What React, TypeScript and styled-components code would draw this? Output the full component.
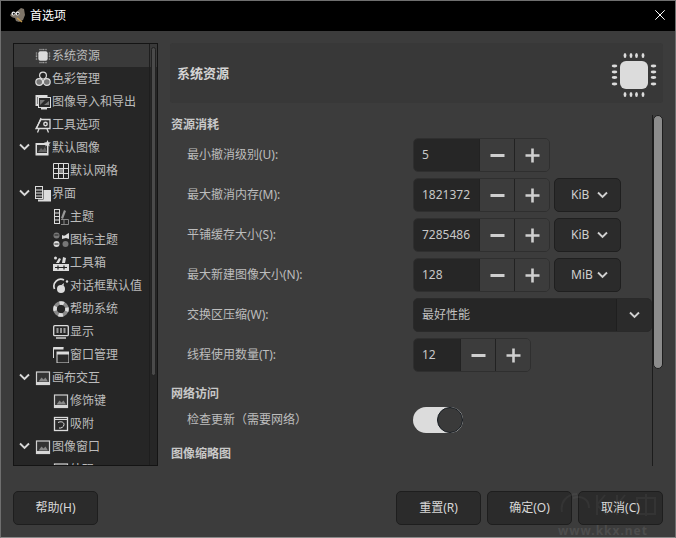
import React from "react";
import styled, { createGlobalStyle } from "styled-components";

const Global = createGlobalStyle`
  html, body { margin: 0; padding: 0; background: #3c3c3c; }
  * { box-sizing: border-box; }
  body { font-family: "Noto Sans", "Noto Sans CJK SC", sans-serif; font-size: 12px; color: #c8c8c8; }
`;

const Window = styled.div`
  position: relative; width: 676px; height: 538px; display: flex; flex-direction: column;
  background: #3c3c3c; border: 1px solid #6f6f6f; border-bottom-color: #8a8a8a; overflow: hidden;
`;
const TitleBar = styled.header`
  height: 30px; flex: none; background: #000; color: #fff; display: flex; align-items: center;
  padding: 0 10px 2px 8px; gap: 3px;
`;
const TitleText = styled.span`flex: 1; font-size: 12px;`;
const Body = styled.main`
  flex: 1; min-height: 0; padding: 12px; display: flex; flex-direction: column; gap: 25px;
`;
const Panes = styled.div`flex: 1; min-height: 0; display: flex; gap: 12px;`;
const Sidebar = styled.nav`
  position: relative; width: 145px; flex: none; background: #262626; border: 1px solid #141414; overflow: hidden;
`;
const Tree = styled.ul`margin: 0; padding: 0; list-style: none; overflow: hidden; height: 100%;`;
const TreeRow = styled.li<{ $level: number; $selected?: boolean }>`
  height: 23px; display: flex; align-items: center; white-space: nowrap;
  padding-left: ${p => (p.$level === 0 ? 21 : 39)}px; gap: 1px; position: relative;
  background: ${p => (p.$selected ? "#3a3a3a" : "transparent")};
  color: #bcbcbc;
`;
const TreeText = styled.span`padding-bottom: 2px;`;
const Expander = styled.span`position: absolute; left: 5px; top: 7px; display: flex;`;
const TreeScroll = styled.div`
  position: absolute; top: 0; right: 0; bottom: 0; width: 8px; border-left: 1px solid #1e1e1e; padding: 3px 1px 0 1px;
`;
const TreeThumb = styled.div`height: 329px; background: #4a4a4a; border: 1px solid #222; border-radius: 3px;`;
const Content = styled.section`flex: 1; min-width: 0; display: flex; flex-direction: column; gap: 12px;`;
const PageHeader = styled.div`
  height: 60px; flex: none; display: flex; align-items: center; justify-content: space-between;
  background: #383838; border-radius: 3px; padding: 0 5px 0 7px;
`;
const PageTitle = styled.h1`margin: 0 0 2px; font-size: 13px; font-weight: 700; color: #d4d4d4;`;
const HeaderIcon = styled.span`display: flex; margin-top: 3px;`;
const ScrollArea = styled.div`flex: 1; min-height: 0; display: flex;`;
const Viewport = styled.div`
  flex: 1; min-width: 0; overflow: hidden; border-right: 1px solid #1c1c1c; padding-left: 1px;
`;
const SectionTitle = styled.h2<{ $top: number }>`
  margin: ${p => p.$top}px 0 5px; height: 18px; line-height: 20px;
  font-size: 12px; font-weight: 700; color: #c8c8c8;
`;
const Rows = styled.div`display: flex; flex-direction: column; gap: 6px;`;
const Row = styled.div`display: flex; align-items: center; padding-left: 16px; min-height: 26px;`;
const Label = styled.label`width: 226px; flex: none; color: #bdbdbd; padding-bottom: 2px;`;
const Controls = styled.div`display: flex; gap: 4px; flex: 1;`;
const Spin = styled.div`
  display: flex; height: 34px; border: 1px solid #2f2f2f; border-radius: 5px; overflow: hidden; background: #3c3c3c;
`;
const SpinEntry = styled.div<{ $w: number }>`
  width: ${p => p.$w}px; background: #262626; display: flex; align-items: center; padding: 0 0 2px 8px;
  color: #c8c8c8; font-size: 12px;
`;
const SpinButton = styled.button`
  width: 35px; border: 0; border-left: 1px solid #222; background: #3c3c3c; padding: 0;
  display: flex; align-items: center; justify-content: center;
`;
const UnitButton = styled.button`
  width: 67px; height: 34px; background: #2b2b2b; border: 1px solid #1f1f1f; border-radius: 5px; padding: 0 12px 0 16px;
  display: flex; align-items: center; justify-content: space-between; color: #d0d0d0; font: inherit;
`;
const UnitText = styled.span`padding-bottom: 2px;`;
const Combo = styled.div`
  flex: 1; height: 34px; display: flex; background: #262626; border: 1px solid #2a2a2a; border-radius: 5px; overflow: hidden;
`;
const ComboText = styled.span`flex: 1; display: flex; align-items: center; padding: 0 0 2px 8px; color: #c0c0c0;`;
const ComboArrow = styled.span`
  width: 35px; display: flex; align-items: center; justify-content: center; background: #2b2b2b; border-left: 1px solid #1f1f1f;
`;
const Switch = styled.div`
  width: 50px; height: 26px; border-radius: 13px; background: #dcdcdc; display: flex; justify-content: flex-end;
`;
const Knob = styled.div`width: 26px; height: 26px; border-radius: 50%; background: #3a3a3a; border: 1px solid #141a20;`;
const VScroll = styled.div`width: 10px; flex: none; display: flex; flex-direction: column;`;
const VThumb = styled.div`height: 254px; background: #8c8c8c; border: 1px solid #1e1e1e; border-radius: 5px;`;
const Footer = styled.footer`height: 34px; flex: none; display: flex; gap: 6px;`;
const FootButton = styled.button`
  width: 85px; height: 34px; background: #2b2b2b; border: 1px solid #1e1e1e; border-radius: 5px;
  color: #d8d8d8; font: inherit; padding: 0 0 2px;
`;
const Spacer = styled.div`flex: 1;`;
const Watermark = styled.div`
  position: absolute; right: 27px; bottom: -2px; color: #4d4d4d; font-weight: 700; font-size: 12px;
  letter-spacing: 1px; pointer-events: none;
`;
const WatermarkMark = styled.svg`
  position: absolute; right: 12px; bottom: 19px; pointer-events: none;
`;

const F = "#dcdcdc";

const Chip = ({ size }: { size: number }) => (
  <svg width={size} height={size} viewBox="0 0 48 48">
    <rect x="10" y="10" width="28" height="28" rx="6" fill={F} />
    {[15, 21, 26.5, 33].map(v => (
      <g key={v} fill={F}>
        <ellipse cx={v} cy="4.5" rx="1.4" ry="2.6" />
        <ellipse cx={v} cy="43.5" rx="1.4" ry="2.6" />
        <ellipse cx="4.5" cy={v} rx="2.8" ry="1.4" />
        <ellipse cx="43.5" cy={v} rx="2.8" ry="1.4" />
      </g>
    ))}
  </svg>
);

const Glyphs: Record<string, React.ReactNode> = {
  chip: <Chip size={16} />,
  color: (
    <svg width="16" height="16" viewBox="0 0 16 16" fill="#555" stroke={F} strokeWidth="1.2">
      <circle cx="8" cy="4.6" r="3.4" fill="#262626" /><circle cx="4.2" cy="11" r="3.4" fill="#777" /><circle cx="11.8" cy="11" r="3.4" fill="#777" />
    </svg>
  ),
  io: (
    <svg width="16" height="16" viewBox="0 0 16 16">
      <path d="M0.5 1h12v2H2.5v7h2v2h-4z" fill={F} />
      <rect x="3.5" y="3.5" width="12" height="10" fill="#2a2a2a" stroke={F} />
      <path d="M5 6h5l-5 5zM14 11H9l5-4z" fill="#777" />
      <rect x="6" y="14" width="6" height="1.5" fill={F} />
    </svg>
  ),
  tool: (
    <svg width="16" height="16" viewBox="0 0 16 16">
      <path d="M1 11.5h14v-9H6z" fill="#2a2a2a" stroke={F} strokeWidth="1.3" />
      <path d="M6 1L1.5 11.5M4 12l-1.5 3.5M12 12l1.5 3.5" stroke={F} strokeWidth="1.3" fill="none" />
      <circle cx="10.5" cy="7" r="2.4" fill={F} /><circle cx="10.5" cy="7" r="1" fill="#2a2a2a" />
    </svg>
  ),
  defimg: (
    <svg width="16" height="16" viewBox="0 0 16 16">
      <rect x="0.5" y="3" width="13" height="12.5" fill={F} />
      <rect x="2" y="5" width="10" height="8" fill="#333" />
      <path d="M3 12l3-4 2 2 2-3 2 5z" fill="#666" />
      <path d="M12.5 0l1 2.2 2.4.2-1.8 1.6.6 2.4-2.2-1.3-2.2 1.3.6-2.4L9.1 2.4l2.4-.2z" fill={F} />
    </svg>
  ),
  grid: (
    <svg width="16" height="16" viewBox="0 0 16 16" fill="none" stroke={F}>
      <rect x="5.5" y="5.5" width="5" height="5" fill="#888" stroke="none" />
      <path d="M.5.5h15v15H.5zM5.5.5v15M10.5.5v15M.5 5.5h15M.5 10.5h15" />
    </svg>
  ),
  iface: (
    <svg width="16" height="16" viewBox="0 0 16 16">
      <rect x="0.5" y="0.5" width="7" height="12" fill="#2a2a2a" stroke={F} />
      <path d="M1 4h6M1 7h6M1 10h6" stroke={F} />
      <path d="M8.5 4H16v11.5H3v-2h5.5z" fill={F} />
    </svg>
  ),
  theme: (
    <svg width="16" height="16" viewBox="0 0 16 16">
      <rect x="1.5" y="0.5" width="5" height="14" fill="#2a2a2a" stroke={F} />
      <path d="M2 4h4M2 7.5h4M2 11h4" stroke={F} />
      <path d="M8 9l3-8 2 1-3 8z" fill="#999" />
      <path d="M8 10.5h7.5v5H8M11 10.5v5" stroke="#888" fill="none" />
    </svg>
  ),
  icontheme: (
    <svg width="16" height="16" viewBox="0 0 16 16">
      <circle cx="3.5" cy="3.5" r="3" fill="#777" />
      <path d="M9 3c2 1 3 1 5-1l2-1v6l-3-1-4 1z" fill={F} />
      <circle cx="3.5" cy="12" r="3" fill={F} />
      <circle cx="12.5" cy="12" r="3" fill="#777" />
      <path d="M1.5 3h4M1.5 12h4" stroke="#222" />
    </svg>
  ),
  toolbox: (
    <svg width="16" height="16" viewBox="0 0 16 16">
      <path d="M0 9h16v7H0z" fill={F} />
      <path d="M2 12.5h12M5 10.5v4M11 10.5v4" stroke="#222" strokeWidth="1.2" />
      <path d="M3 8l3-5 2 1-2 4zM9 8l1-6 3 1-1 5z" fill={F} />
      <circle cx="2.5" cy="3" r="1.5" fill={F} />
    </svg>
  ),
  dialog: (
    <svg width="16" height="16" viewBox="0 0 16 16" fill="none">
      <path d="M1.5 11A7 7 0 0 1 11 2" stroke={F} strokeWidth="1.7" />
      <circle cx="14" cy="3.5" r="1.2" fill={F} />
      <circle cx="8" cy="11" r="4" fill={F} />
      <path d="M8.5 7L11 5 10.5 8z" fill={F} />
    </svg>
  ),
  help: (
    <svg width="16" height="16" viewBox="0 0 16 16" fill="none">
      <circle cx="8" cy="8" r="6" stroke="#8a8a8a" strokeWidth="3.6" />
      <circle cx="8" cy="8" r="6" stroke={F} strokeWidth="3.6" strokeDasharray="4.5 4.9" strokeDashoffset="2.2" />
    </svg>
  ),
  display: (
    <svg width="16" height="16" viewBox="0 0 16 16" fill="none">
      <rect x="0.7" y="1.7" width="14.6" height="10" rx="1" stroke={F} strokeWidth="1.3" />
      <path d="M4.5 4v5M8 4v5M11.5 4v5" stroke="#999" strokeWidth="2" />
      <path d="M3 14h10" stroke={F} strokeWidth="1.4" />
    </svg>
  ),
  wins: (
    <svg width="16" height="16" viewBox="0 0 16 16">
      <path d="M.5 11V.5h10" fill="none" stroke={F} />
      <path d="M.5.5h10v2H.5z" fill={F} />
      <rect x="4" y="5" width="12" height="11" fill="#2a2a2a" stroke={F} />
      <path d="M4 5h12v2.5H4z" fill={F} />
    </svg>
  ),
  canvas: (
    <svg width="16" height="16" viewBox="0 0 16 16">
      <rect x="1.5" y="2" width="13" height="12.5" fill="#333" stroke="#d0d0d0" strokeWidth="1.2" />
      <rect x="1" y="12" width="14" height="2.8" fill="#d8d8d8" />
      <path d="M3.5 11.5l3-4 2 2 2-2 2.5 4z" fill="#888" />
    </svg>
  ),
  snap: (
    <svg width="16" height="16" viewBox="0 0 16 16" fill="none">
      <rect x="1.5" y="1.5" width="13" height="13" fill="#2a2a2a" stroke={F} strokeWidth="1.3" />
      <path d="M1.5 3.5h13" stroke={F} />
      <path d="M5 6.5c3-1.5 6-.5 6 2s-3 4-5 3.5" stroke={F} />
    </svg>
  ),
};

const Chevron = ({ color = "#cfcfcf" }: { color?: string }) => (
  <svg width="11" height="8" viewBox="0 0 11 8" fill="none">
    <path d="M1 1.5l4.5 4.5L10 1.5" stroke={color} strokeWidth="1.9" />
  </svg>
);
const Minus = () => (
  <svg width="15" height="15" viewBox="0 0 15 15"><path d="M0.5 7.5h14" stroke="#cfcfcf" strokeWidth="3" /></svg>
);
const Plus = () => (
  <svg width="15" height="15" viewBox="0 0 15 15"><path d="M0.5 7.5h14M7.5 0.5v14" stroke="#cfcfcf" strokeWidth="2.6" /></svg>
);

const nav: { t: string; i: string; l: number; open?: boolean; sel?: boolean }[] = [
  { t: "系统资源", i: "chip", l: 0, sel: true },
  { t: "色彩管理", i: "color", l: 0 },
  { t: "图像导入和导出", i: "io", l: 0 },
  { t: "工具选项", i: "tool", l: 0 },
  { t: "默认图像", i: "defimg", l: 0, open: true },
  { t: "默认网格", i: "grid", l: 1 },
  { t: "界面", i: "iface", l: 0, open: true },
  { t: "主题", i: "theme", l: 1 },
  { t: "图标主题", i: "icontheme", l: 1 },
  { t: "工具箱", i: "toolbox", l: 1 },
  { t: "对话框默认值", i: "dialog", l: 1 },
  { t: "帮助系统", i: "help", l: 1 },
  { t: "显示", i: "display", l: 1 },
  { t: "窗口管理", i: "wins", l: 1 },
  { t: "画布交互", i: "canvas", l: 0, open: true },
  { t: "修饰键", i: "canvas", l: 1 },
  { t: "吸附", i: "snap", l: 1 },
  { t: "图像窗口", i: "canvas", l: 0, open: true },
  { t: "外观", i: "canvas", l: 1 },
];

const SpinBox = ({ value, w = 65 }: { value: string; w?: number }) => (
  <Spin>
    <SpinEntry $w={w}>{value}</SpinEntry>
    <SpinButton><Minus /></SpinButton>
    <SpinButton><Plus /></SpinButton>
  </Spin>
);
const Unit = ({ u }: { u: string }) => (
  <UnitButton><UnitText>{u}</UnitText><Chevron /></UnitButton>
);

export default function App() {
  return (
    <Window>
      <Global />
      <TitleBar>
        <svg width="18" height="16" viewBox="0 0 18 16">
          <path d="M1 8c2-2 3-2 5-2l6-5 3 1 1 6-2 5-4 2-3-1-1-3C4 11 2 10 1 8z" fill="#7d7468" />
          <circle cx="4.5" cy="6.5" r="2" fill="#eee" /><circle cx="8.5" cy="6.5" r="2" fill="#eee" />
          <circle cx="4.8" cy="6.8" r="1" fill="#111" /><circle cx="8.8" cy="6.8" r="1" fill="#111" />
          <path d="M8 11l5 4" stroke="#c79a4b" strokeWidth="1.4" />
        </svg>
        <TitleText>首选项</TitleText>
        <svg width="10" height="10" viewBox="0 0 10 10"><path d="M.3.3l9.4 9.4M9.7.3L.3 9.7" stroke="#fff" /></svg>
      </TitleBar>
      <Body>
        <Panes>
          <Sidebar>
            <Tree>
              {nav.map(n => (
                <TreeRow key={n.t} $level={n.l} $selected={n.sel}>
                  {n.open && <Expander><Chevron color="#d8d8d8" /></Expander>}
                  {Glyphs[n.i]}
                  <TreeText>{n.t}</TreeText>
                </TreeRow>
              ))}
            </Tree>
            <TreeScroll><TreeThumb /></TreeScroll>
          </Sidebar>
          <Content>
            <PageHeader>
              <PageTitle>系统资源</PageTitle>
              <HeaderIcon><Chip size={48} /></HeaderIcon>
            </PageHeader>
            <ScrollArea>
              <Viewport>
                <SectionTitle $top={0}>资源消耗</SectionTitle>
                <Rows>
                  <Row><Label>最小撤消级别(U):</Label><Controls><SpinBox value="5" /></Controls></Row>
                  <Row><Label>最大撤消内存(M):</Label><Controls><SpinBox value="1821372" /><Unit u="KiB" /></Controls></Row>
                  <Row><Label>平铺缓存大小(S):</Label><Controls><SpinBox value="7285486" /><Unit u="KiB" /></Controls></Row>
                  <Row><Label>最大新建图像大小(N):</Label><Controls><SpinBox value="128" /><Unit u="MiB" /></Controls></Row>
                  <Row>
                    <Label>交换区压缩(W):</Label>
                    <Combo><ComboText>最好性能</ComboText><ComboArrow><Chevron /></ComboArrow></Combo>
                  </Row>
                  <Row><Label>线程使用数量(T):</Label><Controls><SpinBox value="12" w={46} /></Controls></Row>
                </Rows>
                <SectionTitle $top={12}>网络访问</SectionTitle>
                <Row><Label>检查更新（需要网络）</Label><Switch><Knob /></Switch></Row>
                <SectionTitle $top={11}>图像缩略图</SectionTitle>
              </Viewport>
              <VScroll><VThumb /></VScroll>
            </ScrollArea>
          </Content>
        </Panes>
        <Footer>
          <FootButton>帮助(H)</FootButton>
          <Spacer />
          <FootButton>重置(R)</FootButton>
          <FootButton>确定(O)</FootButton>
          <FootButton>取消(C)</FootButton>
        </Footer>
      </Body>
      <WatermarkMark width="104" height="26" viewBox="0 0 104 26" fill="none" stroke="rgba(255,255,255,0.045)" strokeWidth="2">
        <path d="M3 20C1 10 8 2 18 2M14 6c10-3 16 2 16 10M38 3v20M46 3l-8 10 10 10M58 3v20M66 3l-8 10 10 10M78 6h18v16H78zM87 2v22" />
      </WatermarkMark>
      <Watermark>www.kkx.net</Watermark>
    </Window>
  );
}
